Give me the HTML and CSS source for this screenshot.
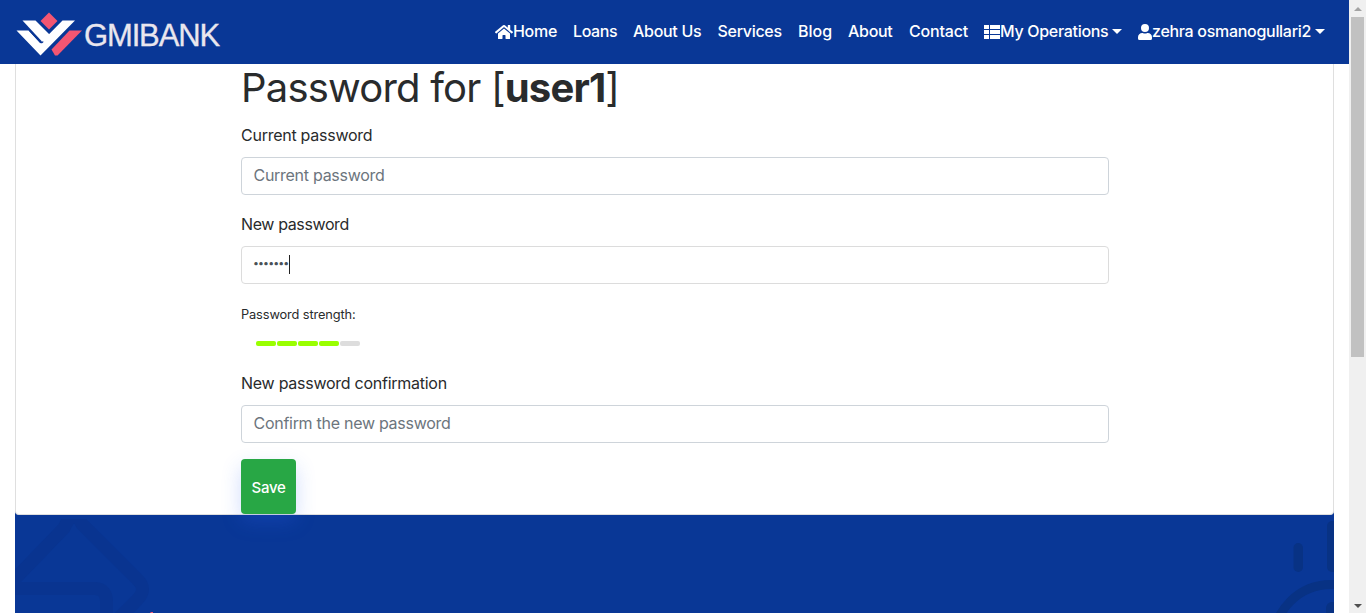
FILE: index.html
```
<!DOCTYPE html>
<html lang="en">
<head>
<meta charset="utf-8">
<title>GMIBANK - Password</title>
<link rel="stylesheet" href="styles.css">
</head>
<body>
<div class="page">
  <header class="navbar">
    <a class="brand">
      <svg class="brand-mark" width="68" height="46" viewBox="0.500 -0.500 68 46">
        <path fill="#f35672" d="M33.500 0 42 8.500 33.500 17 25 8.500z"/>
        <path fill="#fff" d="M7 8H20L37.500 25.500 32 31 26 28.500z"/>
        <path fill="#fff" d="M1 18H13L24.800 30.500 47 8H59.500L25 43z"/>
        <path fill="none" stroke="#093796" stroke-width="1.300" d="M13.700 17.500 24.800 29.700Q26.500 31 27.600 29"/>
        <path fill="#f35672" d="M54 18H66.500L42 43H39.500L36 37z"/>
      </svg>
      <span class="brand-name">GMIBANK</span>
    </a>
    <nav class="nav">
      <a class="nav-link home"><svg width="18" height="16" viewBox="0 0 576 512"><path fill="currentColor" d="M280.400 148.300 96 300.100V464a16 16 0 0 0 16 16l112.100-.3a16 16 0 0 0 15.900-16V368a16 16 0 0 1 16-16h64a16 16 0 0 1 16 16v95.600a16 16 0 0 0 16 16.100L464 480a16 16 0 0 0 16-16V300L295.700 148.300a12.200 12.200 0 0 0-15.300 0zM571.600 251.500 488 182.600V44.100a12 12 0 0 0-12-12h-56a12 12 0 0 0-12 12v72.600L318.500 43a48 48 0 0 0-61 0L4.300 251.500a12 12 0 0 0-1.600 16.900l25.500 31A12 12 0 0 0 45.200 301l235.200-193.700a12.200 12.200 0 0 1 15.300 0L530.900 301a12 12 0 0 0 16.900-1.600l25.500-31a12 12 0 0 0-1.700-16.900z"/></svg><span>Home</span></a>
      <a class="nav-link loans"><span>Loans</span></a>
      <a class="nav-link about-us"><span>About Us</span></a>
      <a class="nav-link services"><span>Services</span></a>
      <a class="nav-link blog"><span>Blog</span></a>
      <a class="nav-link about"><span>About</span></a>
      <a class="nav-link contact"><span>Contact</span></a>
      <a class="nav-link operations"><svg width="16" height="16" viewBox="0 0 16 16"><path fill="currentColor" d="M0 1h5v4H0zM6 1H16v4H6zM0 6h5v4H0zM6 6H16v4H6zM0 11h5v4H0zM6 11H16v4H6z"/></svg><span>My Operations</span><i class="caret"></i></a>
      <a class="nav-link account"><svg width="14" height="16" viewBox="0 0 448 512"><path fill="currentColor" d="M224 256a128 128 0 1 0 0-256 128 128 0 0 0 0 256zm89.600 32h-16.700a174 174 0 0 1-145.800 0h-16.700A134.400 134.400 0 0 0 0 422.400V464a48 48 0 0 0 48 48h352a48 48 0 0 0 48-48v-41.600A134.400 134.400 0 0 0 313.600 288z"/></svg><span>zehra osmanogullari2</span><i class="caret"></i></a>
    </nav>
  </header>
  <main class="card">
    <form class="form">
      <h1 class="title">Password for [<b>user1</b>]</h1>
      <label class="label current">Current password</label>
      <div class="control placeholder"><span>Current password</span></div>
      <label class="label new">New password</label>
      <div class="control value"><span class="dots">•••••••</span><i class="cursor"></i></div>
      <div class="strength-label">Password strength:</div>
      <div class="strength"><i class="on"></i><i class="on"></i><i class="on"></i><i class="on"></i><i></i></div>
      <label class="label confirm">New password confirmation</label>
      <div class="control placeholder"><span>Confirm the new password</span></div>
      <button class="save" type="button"><span>Save</span></button>
    </form>
  </main>
  <footer class="footer">
    <svg class="footer-art" width="1319" height="98" viewBox="0 0 1319 98">
      <g fill="none" stroke="#093490" stroke-width="13">
        <path d="M-6 70 49 13Q58-8 67 9L122 64Q133 74 122 85L104 103"/>
        <path d="M0 73.500H80Q92 74 91.500 88V100"/>
      </g>
      <g fill="#083284">
        <rect x="1278.500" y="28" width="9.500" height="29" rx="4.700"/>
        <rect x="1312" y="6" width="14" height="51" rx="5"/>
        <rect x="1311" y="87" width="16" height="30" rx="6"/>
      </g>
      <circle cx="1316" cy="127" r="57.500" fill="none" stroke="#083284" stroke-width="9"/>
      <path fill="#f35672" d="M136 97H138V98H135z"/>
    </svg>
  </footer>
</div>
<aside class="scrollbar"><i class="arrow up"></i><i class="thumb"></i><i class="arrow down"></i></aside>
</body>
</html>
```
FILE: styles.css
```
* { box-sizing: border-box; }
body {
  margin: 0;
  height: 613px;
  display: flex;
  overflow: hidden;
  background: #fff;
  color: #292b2c;
  font-family: Inter, "Liberation Sans", sans-serif;
  font-size: 16px;
  line-height: 24px;
}
.page { width: 1349px; display: flex; flex-direction: column; }
.navbar {
  height: 64px;
  flex: none;
  display: flex;
  align-items: center;
  justify-content: space-between;
  padding: 0 16px;
  background: #093796;
}
.brand { display: flex; align-items: center; padding-top: 6px; }
.brand-mark { flex: none; }
.brand-name {
  color: #e9e6ee;
  font: 31px/40px "Liberation Sans", Arial, sans-serif;
  letter-spacing: -1.15px;
  padding-top: 1px;
  -webkit-text-stroke: .3px #e9e6ee;
}
.nav { display: flex; padding-bottom: 1px; }
.nav-link {
  display: flex;
  flex: none;
  align-items: center;
  padding: 0 8px;
  color: #fff;
  font-weight: 500;
  white-space: nowrap;
  letter-spacing: -.3px;
}
.nav-link svg { flex: none; }
.nav-link span { padding-bottom: 2px; }
.home { width: 78px; }
.loans { width: 60px; letter-spacing: -.4px; }
.about-us { width: 84.500px; }
.services { width: 80.500px; }
.blog { width: 50px; letter-spacing: 0; }
.about { width: 61px; }
.contact { width: 75px; letter-spacing: -.2px; }
.operations { width: 154px; }
.account { width: 203px; }
.caret {
  margin-left: auto;
  border: 5px solid transparent;
  border-top-color: #fff;
  border-bottom: 0;
}
.card {
  height: 451px;
  flex: none;
  margin: 0 15px;
  border: 1px solid #dfdfdf;
  border-top: 0;
  border-radius: 0 0 4px 4px;
  position: relative;
  background: #fff;
  box-shadow: 0 4px 0 #093796;
}
.form { width: 868px; margin-left: 225px; display: flex; flex-direction: column; }
.title { margin: 0 0 8px; height: 48px; font-size: 40px; line-height: 48px; font-weight: 400; letter-spacing: -.8px; white-space: nowrap; }
.title b { font-weight: 700; }
.label { height: 24px; margin: 4px 0 10px; letter-spacing: -.26px; white-space: nowrap; align-self: flex-start; }
.label.current { margin-top: 3px; }
.label.new { letter-spacing: -.38px; }
.control {
  height: 38px;
  margin-bottom: 13px;
  padding: 0 12px 2px;
  border: 1px solid #ced4da;
  border-radius: 4px;
  display: flex;
  align-items: center;
}
.placeholder { padding-left: 11.5px; color: #6c757d; letter-spacing: -.28px; }
.value { padding-left: 11px; border-color: #dcdcdc; color: #495057; }
.dots { font-size: 10.5px; letter-spacing: -.85px; padding-right: 1px; margin-top: -1px; }
.cursor { width: 1px; height: 19px; background: #222; }
.strength-label { height: 20px; margin-top: 8px; font-size: 12.8px; line-height: 20px; letter-spacing: -.12px; }
.strength { display: flex; gap: 1px; margin: 16px 0 21px 15px; }
.strength i { width: 20px; height: 5px; border-radius: 2px; background: #ddd; }
.strength .on { background: #9f0; }
.save {
  width: 55px;
  height: 55px;
  margin-top: 3px;
  padding: 3px 0 0;
  border: 0;
  border-radius: 4px;
  background: #28a745;
  color: #fff;
  font: 500 15px/24px Inter, sans-serif;
  letter-spacing: -.3px;
  box-shadow: 0 8px 20px rgba(45, 100, 245, .22);
}
.footer { height: 98px; margin: 0 15px; background: #093796; }
.footer-art { display: block; }
.scrollbar { width: 17px; display: flex; flex-direction: column; align-items: center; background: #f0f0f0; }
.arrow { border: 4px solid transparent; }
.up { margin-top: 3px; border-bottom-color: #a3a3a3; }
.thumb { width: 13px; height: 340px; margin-top: 6px; background: #c1c1c1; }
.down { margin-top: auto; margin-bottom: 1px; border-top-color: #505050; }
```
